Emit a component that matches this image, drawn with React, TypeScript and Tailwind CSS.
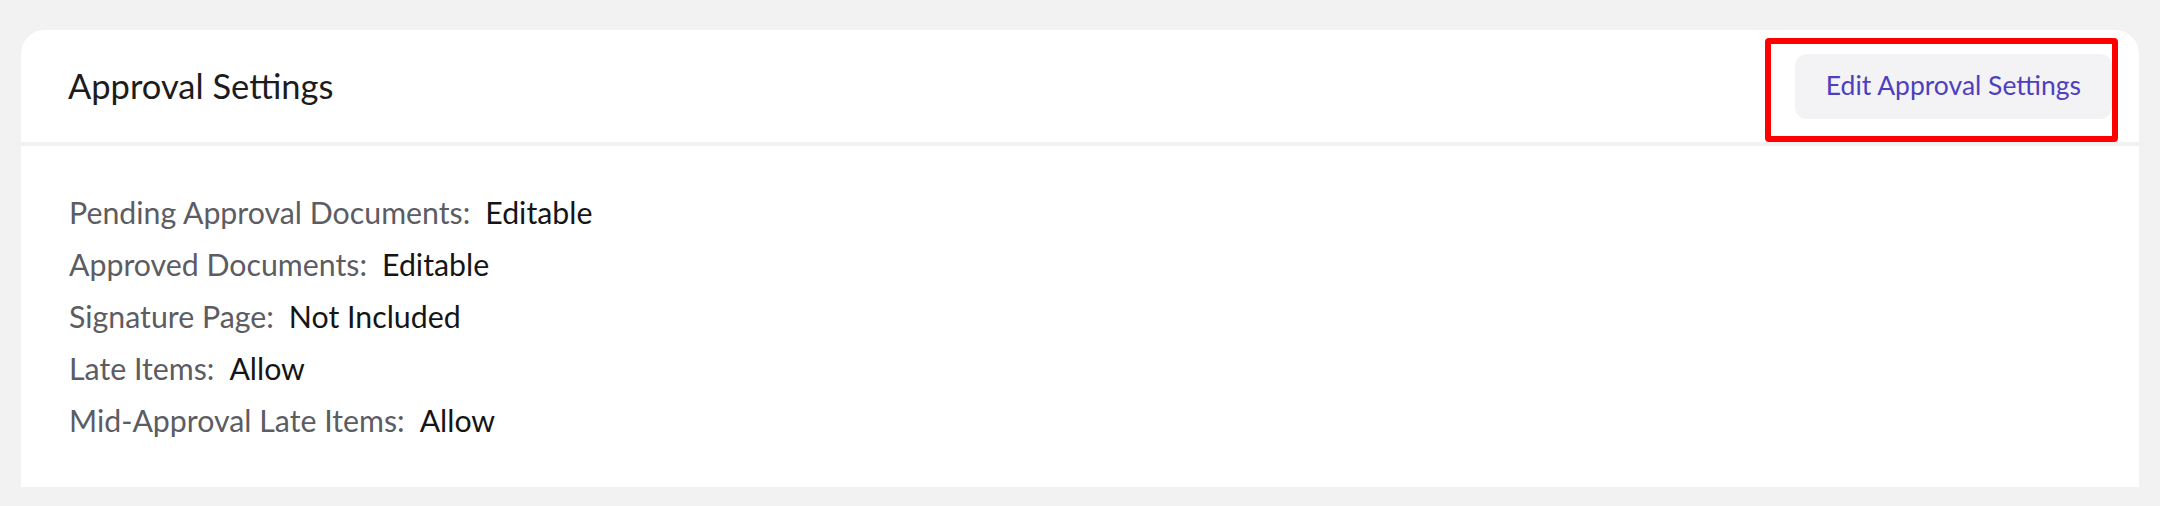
import React from "react";

const rows: { label: string; value: string }[] = [
  { label: "Pending Approval Documents:", value: "Editable" },
  { label: "Approved Documents:", value: "Editable" },
  { label: "Signature Page:", value: "Not Included" },
  { label: "Late Items:", value: "Allow" },
  { label: "Mid-Approval Late Items:", value: "Allow" },
];

export default function App() {
  return (
    <div
      className="min-h-[506px] bg-[#f2f2f2] pt-[30px] px-[21px] pb-[20px]"
      style={{ fontFamily: "Lato, 'Noto Sans', sans-serif" }}
    >
      <div className="bg-white rounded-t-[24px]">
        <div className="flex items-center justify-between h-[112px] pl-[47px] pr-[27px]">
          <h2 className="text-[34.5px] text-[#1c1c1c] font-normal">Approval Settings</h2>
          <div className="relative">
            <button className="h-[65px] px-[31px] rounded-[12px] bg-[#f3f3f6] text-[26.5px] text-[#4f3fbf]">
              Edit Approval Settings
            </button>
            {/* annotation box */}
            <div className="pointer-events-none absolute -left-[30px] -top-[16px] -right-[6px] -bottom-[23px] border-[6px] border-[#ff0000] rounded-[4px]" />
          </div>
        </div>

        <div className="border-t-[4px] border-[#f2f2f2] pt-[40px] pb-[41px] pl-[48px]">
          {rows.map((row) => (
            <div key={row.label} className="flex text-[30.3px] leading-[52px]">
              <span className="text-[#5c5c63]">{row.label}</span>
              <span className="ml-[15px] text-[#151515]">{row.value}</span>
            </div>
          ))}
        </div>
      </div>
    </div>
  );
}
